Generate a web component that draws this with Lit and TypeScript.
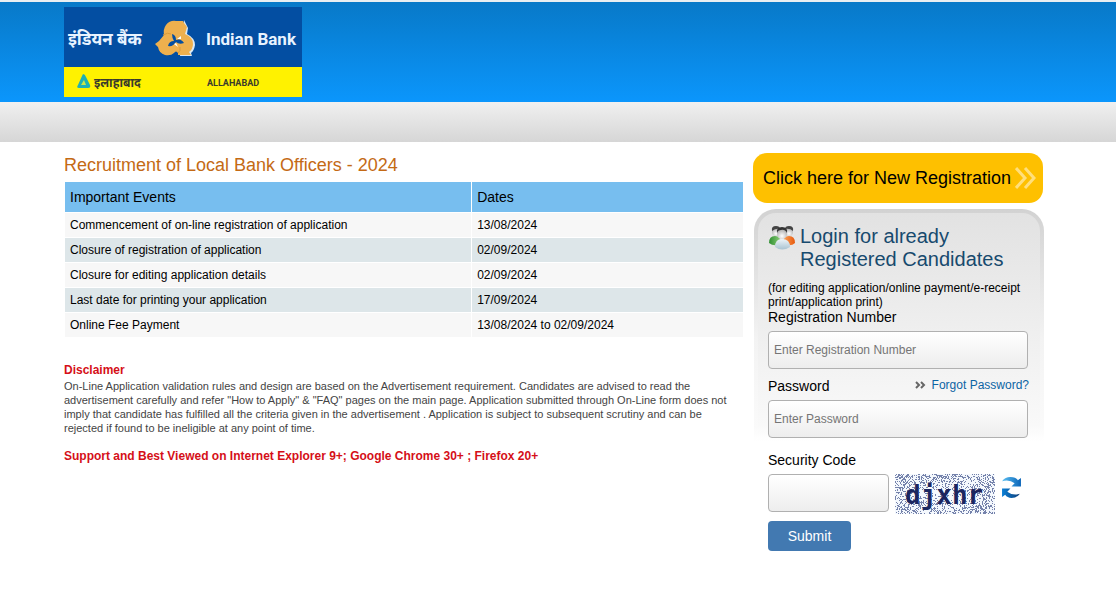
import { LitElement, html, css, svg } from "lit";
import { customElement, property } from "lit/decorators.js";

const EVENTS: Array<[string, string]> = [
  ["Commencement of on-line registration of application", "13/08/2024"],
  ["Closure of registration of application", "02/09/2024"],
  ["Closure for editing application details", "02/09/2024"],
  ["Last date for printing your application", "17/09/2024"],
  ["Online Fee Payment", "13/08/2024 to 02/09/2024"],
];

@customElement("bank-logo")
export class BankLogo extends LitElement {
  static styles = css`
    :host {
      display: block;
    }
    .logo {
      display: block;
      font-family: Roboto, "Noto Sans", sans-serif;
      font-weight: 700;
    }
  `;

  render() {
    return html`
      <svg class="logo" width="238" height="90" viewBox="0 0 238 90" role="img" aria-label="Indian Bank Allahabad">
        <rect width="238" height="60" fill="#034ea2" />
        <rect y="60" width="238" height="30" fill="#fff200" />
        <text x="4" y="38" font-size="17" fill="#e8f3ff">इंडियन बैंक</text>
        <text x="142" y="38" font-size="17" fill="#e8f3ff">Indian Bank</text>
        <text x="30" y="80" font-size="12" fill="#3a3a2c">इलाहाबाद</text>
        <text x="143" y="79" font-size="9" fill="#3a3a2c">ALLAHABAD</text>
        <path d="M120 13 L124 21 L123 27 Q131 31 131 38 Q130 44 127 46 L128 49 H116" fill="#dbe9f5" />
        <path
          d="M102 18 Q106 13 112 14 H119 L120 16 L123 20 L121 27 Q129 30 129 37 Q129 42 125 45 L127 48 H114 V46 Q112 43 110 46 Q107 49 101 48 Q95 46 94 40 L91 37 L95 34 L100 28 Q99 22 102 18Z"
          fill="#eeb04e"
        />
        <path
          d="M108 27 Q112 28 112 33 Q117 31 120 36 Q115 38 112 35 Q109 40 104 39 Q105 34 110 34 Q108 31 108 27Z"
          fill="#034ea2"
        />
        <path d="M113 32 L117 29 L117 32Z M110 37 L112 36 L114 40Z" fill="#fff" />
        <path d="M99 28 Q104 25 107 27 M114 46 Q117 44 116 40" fill="none" stroke="#d99b3b" stroke-width="1" />
        <path d="M19 67 Q21 67 22 70 L26 78 Q27 81 24 81 H15 Q12 81 14 78 L18 69Z" fill="#1fb0b4" />
        <path d="M20 73 L22 78 H17Z" fill="#c8e64a" />
      </svg>
    `;
  }
}

@customElement("events-table")
export class EventsTable extends LitElement {
  static styles = css`
    :host {
      display: block;
    }
    table {
      width: 100%;
      border-spacing: 1px;
      table-layout: fixed;
      font-size: 12px;
      line-height: 16px;
      color: #000;
    }
    th,
    td {
      padding: 4px 5px;
      text-align: left;
      font-weight: 400;
    }
    th {
      padding: 7px 5px;
      background: #77beef;
      font-size: 14px;
    }
    .name {
      width: 60%;
      box-sizing: border-box;
    }
    td {
      background: #f7f7f7;
    }
    tr:nth-child(even) td {
      background: #dde6e9;
    }
  `;

  render() {
    return html`
      <table>
        <thead>
          <tr>
            <th class="name" scope="col">Important Events</th>
            <th scope="col">Dates</th>
          </tr>
        </thead>
        <tbody>
          ${EVENTS.map(([name, date]) => html`<tr><td>${name}</td><td>${date}</td></tr>`)}
        </tbody>
      </table>
    `;
  }
}

@customElement("captcha-image")
export class CaptchaImage extends LitElement {
  @property() code = "djxhr";

  static styles = css`
    :host {
      display: block;
    }
    .captcha {
      display: block;
      font: 700 26px "DejaVu Sans Mono", monospace;
    }
  `;

  // Speckle made from a fixed seed, so that each render gives the same dots.
  private speckle(): string {
    let seed = 20240813;
    let d = "";
    for (let y = 0; y < 40; y++) {
      for (let x = 0; x < 100; x++) {
        seed = (Math.imul(seed, 1664525) + 1013904223) >>> 0;
        const edge = Math.hypot((x - 50) / 50, (y - 20) / 20);
        if (seed / 4294967296 < 0.18 + 0.18 * edge) d += `M${x} ${y}h1v1h-1z`;
      }
    }
    return d;
  }

  render() {
    return html`
      <svg class="captcha" width="100" height="40" viewBox="0 0 100 40" role="img" aria-label="Security code image">
        <rect width="100" height="40" fill="#f4f8fd" />
        ${svg`<path d=${this.speckle()} fill="#7582ab" />`}
        <text x="10" y="30" fill="#1b265f">${this.code}</text>
      </svg>
    `;
  }
}

@customElement("login-panel")
export class LoginPanel extends LitElement {
  static styles = css`
    :host {
      display: block;
    }
    .panel {
      margin: 0 0 0 1px;
      padding: 12px 12px 16px 10px;
      border: 4px solid transparent;
      border-radius: 22px;
      background:
        linear-gradient(#e2e2e2 0, #f9f9f9 212px, #fff 228px) padding-box,
        linear-gradient(#d2d2d2 0, #f3f3f3 130px, #fafafa 218px, #fff 232px) border-box;
    }
    .title {
      display: flex;
      gap: 4px;
      margin: 0 0 10px;
      font-size: 20px;
      font-weight: 400;
      line-height: 23px;
      color: #174a6e;
    }
    .people {
      flex: none;
    }
    .note {
      margin: 0;
      font-size: 12px;
      line-height: 14px;
    }
    label {
      display: block;
      font-size: 14px;
      line-height: 16px;
    }
    input {
      display: block;
      box-sizing: border-box;
      width: 100%;
      height: 38px;
      margin: 0;
      padding: 0 5px;
      border: 1px solid #b0b0b0;
      border-radius: 4px;
      background: linear-gradient(#fff, #ededed);
      font: 12px "Liberation Sans", Arial, sans-serif;
      color: #000;
    }
    input::placeholder {
      color: #757575;
      opacity: 1;
    }
    .field {
      display: grid;
      gap: 6px;
      margin-bottom: 9px;
    }
    .field.password {
      margin-bottom: 14px;
    }
    .field.security {
      margin-bottom: 7px;
    }
    .labels {
      display: flex;
      justify-content: space-between;
      align-items: flex-start;
      margin-right: -1px;
    }
    .forgot {
      display: flex;
      align-items: center;
      gap: 6px;
      font-size: 12px;
      line-height: 14px;
      color: #0c64a4;
      text-decoration: none;
    }
    .code {
      display: flex;
      align-items: flex-start;
      gap: 6px;
    }
    .code input {
      flex: 0 0 121px;
      width: 121px;
    }
    .refresh {
      padding: 3px 0 0;
      border: 0;
      background: none;
      line-height: 0;
    }
    .submit {
      display: block;
      width: 83px;
      height: 30px;
      padding: 0;
      border: 0;
      border-radius: 4px;
      background: #4279b1;
      color: #fff;
      font: 14px "Liberation Sans", Arial, sans-serif;
    }
  `;

  render() {
    return html`
      <form class="panel" @submit=${(e: Event) => e.preventDefault()}>
        <h2 class="title">
          <svg class="people" width="28" height="26" viewBox="0 0 28 26" aria-hidden="true">
            <defs>
              <radialGradient id="face" cx="0.5" cy="0.7" r="0.6">
                <stop offset="0" stop-color="#fff" />
                <stop offset="1" stop-color="#b5b5b5" />
              </radialGradient>
              <linearGradient id="green" x2="1">
                <stop offset="0" stop-color="#2f8f32" />
                <stop offset="1" stop-color="#8fd07a" />
              </linearGradient>
              <linearGradient id="orange" x2="1">
                <stop offset="0" stop-color="#f9a45c" />
                <stop offset="1" stop-color="#e8590c" />
              </linearGradient>
              <linearGradient id="pale" x2="0" y2="1">
                <stop offset="0" stop-color="#eef4f8" />
                <stop offset="1" stop-color="#a9c3d2" />
              </linearGradient>
            </defs>
            <path d="M1 18 Q1 11 7 11 Q13 11 13 19 Q6 22 1 18Z" fill="url(#green)" />
            <path d="M15 19 Q15 11 21 11 Q27 11 27 18 Q23 22 15 19Z" fill="url(#orange)" />
            <circle cx="8" cy="7" r="4" fill="url(#face)" />
            <circle cx="21" cy="7" r="4" fill="url(#face)" />
            <path d="M4 6 Q3 1 8 1 Q12 1 12 4 Q8 3 4 6Z M17 4 Q17 1 21 1 Q26 1 25 6 Q22 3 17 4Z" fill="#444" />
            <path d="M7 22 Q7 14 14 14 Q22 14 22 22 Q14 27 7 22Z" fill="url(#pale)" />
            <circle cx="14" cy="9" r="5" fill="url(#face)" />
            <path d="M9 8 Q8 2 14 2 Q20 2 19 8 Q17 4 13 5 Q10 5 9 8Z" fill="#333" />
          </svg>
          <span>Login for already Registered Candidates</span>
        </h2>
        <p class="note">(for editing application/online payment/e-receipt print/application print)</p>
        <div class="field">
          <label for="reg">Registration Number</label>
          <input id="reg" type="text" placeholder="Enter Registration Number" />
        </div>
        <div class="field password">
          <div class="labels">
            <label for="pwd">Password</label>
            <a class="forgot" href="#forgot">
              <svg width="11" height="8" viewBox="0 0 11 8" aria-hidden="true">
                <path d="M1 1 L4 4 L1 7 M6 1 L9 4 L6 7" fill="none" stroke="#666" stroke-width="2" />
              </svg>
              <span>Forgot Password?</span>
            </a>
          </div>
          <input id="pwd" type="password" placeholder="Enter Password" />
        </div>
        <div class="field security">
          <label for="sec">Security Code</label>
          <div class="code">
            <input id="sec" type="text" />
            <captcha-image></captcha-image>
            <button class="refresh" type="button" aria-label="New security code">
              <svg width="21" height="21" viewBox="0 0 20 20" aria-hidden="true">
                <defs>
                  <linearGradient id="arrow" x2="1">
                    <stop offset="0" stop-color="#5cc0f2" />
                    <stop offset="1" stop-color="#0a64b8" />
                  </linearGradient>
                  <linearGradient id="arrow-back" x2="1">
                    <stop offset="0" stop-color="#0a7fd6" />
                    <stop offset="1" stop-color="#0f3e78" />
                  </linearGradient>
                </defs>
                <path d="M1 4 Q4 0 9 0 Q14 0 16 3 L19 1 V9 H10 L13 6 Q8 2 1 4Z" fill="url(#arrow)" />
                <path d="M18 16 Q15 20 10 20 Q6 20 4 17 L1 19 V11 H9 L6 14 Q11 18 18 16Z" fill="url(#arrow-back)" />
              </svg>
            </button>
          </div>
        </div>
        <button class="submit" type="submit">Submit</button>
      </form>
    `;
  }
}

@customElement("app-root")
export class AppRoot extends LitElement {
  static styles = css`
    :host {
      display: block;
      font-family: "Liberation Sans", Arial, sans-serif;
      color: #000;
      background: #fff;
    }
    .wrap {
      max-width: 988px;
      margin: 0 auto;
    }
    .top {
      padding: 5px 0;
      border-top: 2px solid #e9eef2;
      background: linear-gradient(#0879c8, #0b96fc);
    }
    .bar {
      height: 40px;
      background: linear-gradient(#f0f0f0, #d6d6d6);
    }
    .main {
      display: grid;
      grid-template-columns: minmax(0, 1fr) 291px;
      gap: 9px;
      padding: 11px 8px 40px 0;
      box-sizing: border-box;
    }
    h1 {
      margin: 0 0 4px;
      font-size: 18px;
      font-weight: 400;
      line-height: 24px;
      color: #c46a15;
    }
    .alert {
      margin: 0;
      font-size: 12px;
      font-weight: 700;
      line-height: 16px;
      color: #d50f18;
    }
    .disclaimer {
      margin: 24px 0 13px;
      padding-right: 12px;
    }
    .disclaimer p {
      margin: 1px 0 0;
      font-size: 11px;
      line-height: 14px;
      color: #444;
    }
    .register {
      display: flex;
      align-items: center;
      justify-content: space-between;
      height: 50px;
      margin: 0 1px 6px 0;
      padding: 0 7px 0 10px;
      box-sizing: border-box;
      border-radius: 14px;
      background: #fec000;
      color: #000;
      font-size: 18px;
      text-decoration: none;
      white-space: nowrap;
    }
  `;

  render() {
    return html`
      <header>
        <div class="top"><div class="wrap"><bank-logo></bank-logo></div></div>
        <div class="bar"></div>
      </header>
      <main class="wrap main">
        <section>
          <h1>Recruitment of Local Bank Officers - 2024</h1>
          <events-table></events-table>
          <div class="disclaimer">
            <h2 class="alert">Disclaimer</h2>
            <p>
              On-Line Application validation rules and design are based on the Advertisement requirement. Candidates are
              advised to read the advertisement carefully and refer "How to Apply" &amp; "FAQ" pages on the main page.
              Application submitted through On-Line form does not imply that candidate has fulfilled all the criteria
              given in the advertisement . Application is subject to subsequent scrutiny and can be rejected if found to
              be ineligible at any point of time.
            </p>
          </div>
          <p class="alert">Support and Best Viewed on Internet Explorer 9+; Google Chrome 30+ ; Firefox 20+</p>
        </section>
        <aside>
          <a class="register" href="#register">
            <span>Click here for New Registration</span>
            <svg width="21" height="22" viewBox="0 0 21 22" aria-hidden="true">
              <path d="M1 1 L10 11 L1 21 M10 1 L19 11 L10 21" fill="none" stroke="#ffdf7c" stroke-width="3" />
            </svg>
          </a>
          <login-panel></login-panel>
        </aside>
      </main>
    `;
  }
}
